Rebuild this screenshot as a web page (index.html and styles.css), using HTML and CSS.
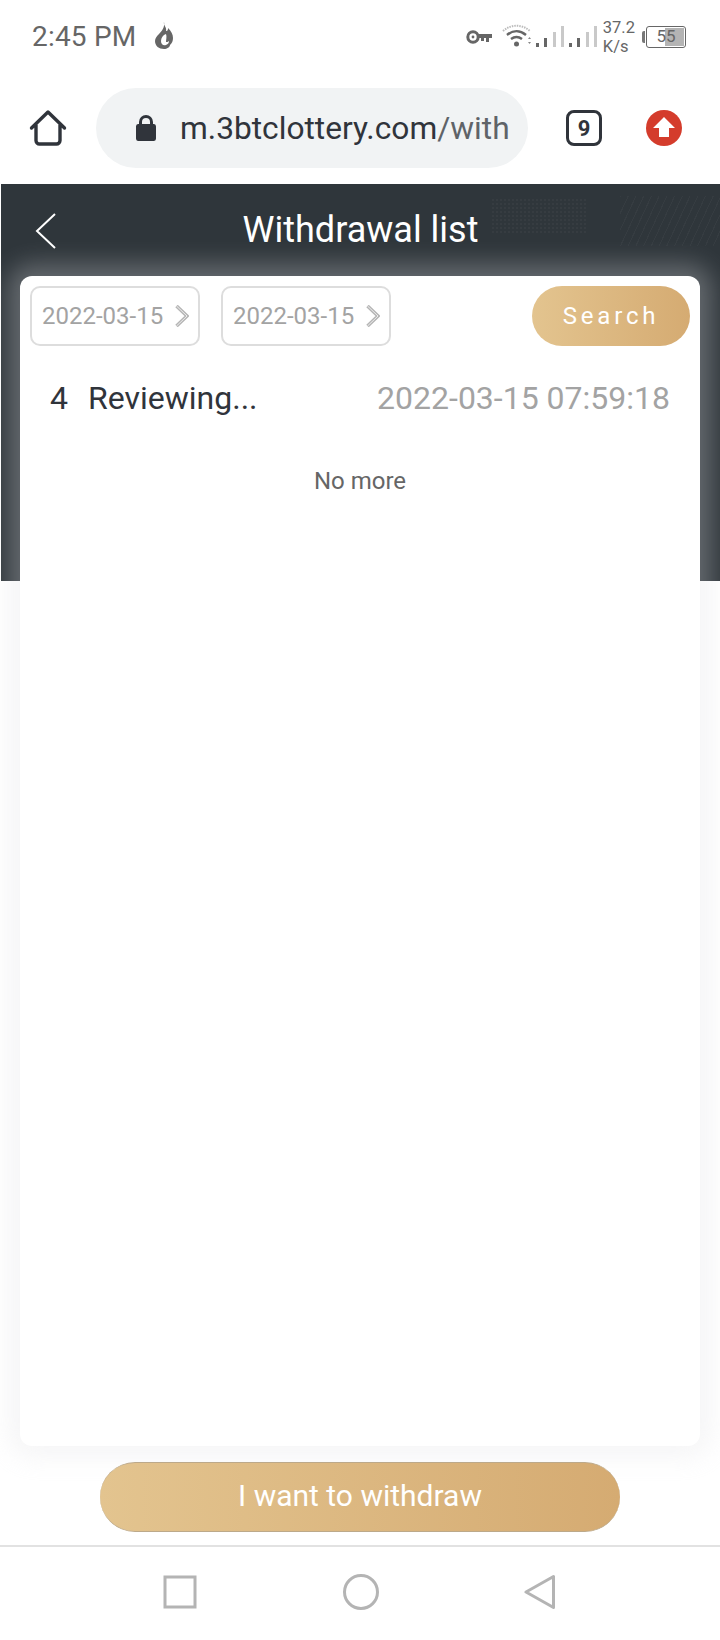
FILE: index.html
```html
<!DOCTYPE html>
<html lang="en">
<head>
<meta charset="utf-8">
<title>Withdrawal list</title>
<link rel="stylesheet" href="styles.css">
</head>
<body>
<div class="phone">
  <div class="status">
    <div class="status-left">
      <span class="time">2:45 PM</span>
      <svg class="flame" width="20" height="30" viewBox="0 0 20 30"><path fill="#666" fill-rule="evenodd" d="M10 0c-1 3 3 5 2 9 2 0 2-2 2-3 3 3 5 6 5 10 0 3-1 5-3 7 0 2-3 4-6 4-5 0-9-3-9-8 0-3 2-5 4-7 3-3 6-7 5-12zM12 12c-3 1-5 4-5 7s2 5 5 4c2-1 3-2 3-4-1 1-2 1-3 1 0-3 1-5 0-8z"/></svg>
    </div>
    <div class="status-right">
      <svg class="key" width="27" height="16" viewBox="0 0 27 16"><circle cx="7" cy="8" r="5.2" fill="none" stroke="#666" stroke-width="3"/><circle cx="7" cy="8" r="1.400" fill="#666"/><path fill="#666" d="M12 5h14v4h-3v4h-3V9h-2v3h-3V9h-3z"/></svg>
      <svg class="wifi" width="30" height="26" viewBox="0 0 30 26"><path d="M1 7C9 0 20 0 28 7" fill="none" stroke="#bbb" stroke-width="2" stroke-dasharray="1.500 1"/><path d="M5 11c6-5 13-5 19 0M9 15c4-3 7-3 11 0" fill="none" stroke="#666" stroke-width="2.400"/><circle cx="14.500" cy="20" r="2.500" fill="#666"/><path d="M26 15h3l-1.500-2zM26 18h3l-1.500 2z" fill="#888"/></svg>
      <svg class="signal" width="31" height="24" viewBox="0 0 31 24"><g fill="#666"><rect x="0" y="18" width="3" height="4"/><rect x="8" y="13" width="3" height="9"/></g><g fill="#c9c9c9"><rect x="17" y="7" width="3" height="15"/><rect x="25" y="1" width="3" height="21"/></g></svg>
      <svg class="signal" width="31" height="24" viewBox="0 0 31 24"><g fill="#666"><rect x="0" y="18" width="3" height="4"/><rect x="8" y="13" width="3" height="9"/></g><g fill="#c9c9c9"><rect x="17" y="7" width="3" height="15"/><rect x="25" y="1" width="3" height="21"/></g></svg>
      <div class="speed"><span>37.2</span><span>K/s</span></div>
      <div class="battery">
        <span class="battery-nub"></span>
        <div class="battery-body"><span class="battery-fill"></span><span class="battery-num">55</span></div>
      </div>
    </div>
  </div>

  <div class="browser">
    <svg class="home" width="38" height="38" viewBox="0 0 38 38"><path d="M2.500 19 19 3l16.500 16M7 16v15.500a3.500 3.500 0 0 0 3.500 3.500h17a3.500 3.500 0 0 0 3.500-3.500V16" fill="none" stroke="#30343b" stroke-width="3.400" stroke-linecap="round" stroke-linejoin="round"/></svg>
    <div class="urlbar">
      <svg class="lock" width="22" height="28" viewBox="0 0 22 28"><path fill="#30343b" d="M4 10V8a7 7 0 0 1 14 0v2h1a2.500 2.500 0 0 1 2 2.500v12a2.500 2.500 0 0 1-2 2.500H3a2.500 2.500 0 0 1-2-2.500v-12A2.500 2.500 0 0 1 3 10zM7 10h8V8a4 4 0 0 0-8 0z"/></svg>
      <span class="url"><span class="url-host">m.3btclottery.com</span>/with</span>
    </div>
    <div class="tabs">9</div>
    <svg class="update" width="36" height="36" viewBox="0 0 36 36"><circle cx="18" cy="18" r="18" fill="#d43c2c"/><path fill="#fff" d="M18 7 29 18h-6v9H13v-9H7z"/></svg>
  </div>

  <main class="page">
    <header class="hero">
      <svg class="back" width="22" height="38" viewBox="0 0 22 38"><path d="M20 2 2 19l18 17" fill="none" stroke="#fff" stroke-width="2"/></svg>
      <h1 class="title">Withdrawal list</h1>
    </header>
    <section class="card">
      <div class="filters">
        <div class="date"><span>2022-03-15</span><svg width="14" height="22" viewBox="0 0 14 22"><path d="M1.500 1 12 11 1.500 21" fill="none" stroke="#b5b5b5" stroke-width="3.500"/><path d="M1.500 1 12 11 1.500 21" fill="none" stroke="#eee" stroke-width="1"/></svg></div>
        <div class="date"><span>2022-03-15</span><svg width="14" height="22" viewBox="0 0 14 22"><path d="M1.500 1 12 11 1.500 21" fill="none" stroke="#b5b5b5" stroke-width="3.500"/><path d="M1.500 1 12 11 1.500 21" fill="none" stroke="#eee" stroke-width="1"/></svg></div>
        <button class="search">Search</button>
      </div>
      <div class="row">
        <span class="row-id">4</span>
        <span class="row-status">Reviewing...</span>
        <span class="row-time">2022-03-15 07:59:18</span>
      </div>
      <p class="nomore">No more</p>
    </section>
    <div class="actions"><button class="withdraw">I want to withdraw</button></div>
  </main>

  <nav class="navbar">
    <svg width="34" height="34" viewBox="0 0 34 34"><rect x="2" y="2" width="30" height="30" fill="none" stroke="#b4b4b4" stroke-width="3"/></svg>
    <svg width="38" height="38" viewBox="0 0 38 38"><circle cx="19" cy="19" r="16.500" fill="none" stroke="#b4b4b4" stroke-width="3"/></svg>
    <svg width="32" height="36" viewBox="0 0 32 36"><path d="M29.500 2.500v31L2 18z" fill="none" stroke="#b4b4b4" stroke-width="3" stroke-linejoin="round"/></svg>
  </nav>
</div>
</body>
</html>
```
FILE: styles.css
```css
* { box-sizing: border-box; }
html, body { margin: 0; padding: 0; background: #fff; }
body { font-family: Roboto, "Liberation Sans", sans-serif; }
.phone { width: 720px; height: 1640px; display: flex; flex-direction: column; overflow: hidden; }

.status { height: 72px; display: flex; justify-content: space-between; align-items: center; padding: 1px 34px 0 32px; color: #666; }
.status-left { display: flex; align-items: center; gap: 18px; }
.time { font-size: 28px; letter-spacing: .2px; }
.flame { display: block; }
.status-right { display: flex; align-items: center; }
.key { margin-right: 9px; }
.wifi { margin-right: 4px; }
.signal { margin-right: 2px; }
.speed { display: flex; flex-direction: column; font-size: 16.500px; line-height: 19px; margin: 0 7px 0 1px; }
.battery { display: flex; align-items: center; gap: 1px; }
.battery-nub { width: 3px; height: 12px; background: #777; border-radius: 2px 0 0 2px; }
.battery-body { position: relative; width: 40px; height: 22px; border: 1.500px solid #666; border-radius: 3px; font-size: 17px; line-height: 19px; text-align: center; }
.battery-fill { position: absolute; right: 1px; top: 1px; bottom: 1px; width: 19px; background: #b4b4b4; }
.battery-num { position: relative; }

.browser { height: 112px; display: flex; align-items: center; padding: 0 36px 0 29px; }
.home { margin-right: 29px; }
.urlbar { width: 432px; height: 80px; border-radius: 40px; background: #f1f3f4; display: flex; align-items: center; padding-left: 39px; margin-right: 38px; overflow: hidden; }
.lock { margin-right: 23px; flex: none; }
.url { font-size: 31.700px; color: #5f6368; white-space: nowrap; }
.url-host { color: #30343b; }
.tabs { width: 36px; height: 36px; border: 3.500px solid #30343b; border-radius: 8px; font-size: 22px; font-weight: 700; color: #30343b; display: flex; align-items: center; justify-content: center; margin-right: 44px; }
.update { display: block; }

.page { flex: 1; display: flex; flex-direction: column; min-height: 0; }
.hero { height: 397px; margin-left: 1px; background: #2f363b; display: flex; align-items: flex-start; justify-content: center; position: relative; padding-top: 23px; }
.hero::before { content: ""; position: absolute; left: 490px; top: 14px; width: 95px; height: 36px; background: radial-gradient(circle, rgba(255,255,255,.03) 0 1px, transparent 1px) 0 0 / 4px 4px; }
.hero::after { content: ""; position: absolute; right: 0; top: 12px; width: 100px; height: 50px; background: repeating-linear-gradient(115deg, rgba(255,255,255,.03) 0 1px, transparent 1px 7px); }
.back { position: absolute; left: 34px; top: 28px; }
.title { margin: 0; font-size: 36px; line-height: 46px; font-weight: 400; color: #fff; }
.card { margin: -305px 20px 0; height: 1170px; background: #fff; border-radius: 12px; box-shadow: 0 0 24px 12px rgba(224,226,228,.3); position: relative; z-index: 1; padding: 10px 10px 0; }
.filters { display: flex; align-items: center; height: 60px; }
.date { width: 170px; height: 60px; border: 2px solid #ddd; border-radius: 10px; display: flex; align-items: center; justify-content: space-between; padding: 0 9px 0 10px; color: #a3a3a3; font-size: 24px; margin-right: 21px; }
.search { margin-left: auto; width: 158px; height: 60px; border: 0; border-radius: 30px; background: linear-gradient(90deg, #e3c48f, #d5ab72); color: #fff; font: 400 24px Roboto, sans-serif; letter-spacing: 3.800px; padding: 0; }
.row { display: flex; align-items: center; height: 54px; margin-top: 25px; padding: 0 20px; font-size: 32px; color: #30343b; }
.row-id { margin-right: 20px; }
.row-time { margin-left: auto; color: #a3a3a3; }
.nomore { margin: 42px 0 0; text-align: center; font-size: 24px; line-height: 28px; color: #666; }
.actions { display: flex; justify-content: center; margin-top: 16px; position: relative; z-index: 1; }
.withdraw { width: 520px; height: 70px; border: 0; border-top: 1px solid #bca98a; border-bottom: 1px solid #bca98a; border-radius: 35px; background: linear-gradient(90deg, #e3c48f, #d5ab72); color: #fff; font: 400 30px Roboto, sans-serif; padding: 0 0 3px; }

.navbar { height: 95px; margin-top: 13px; border-top: 2px solid #e2e2e2; display: flex; justify-content: space-between; align-items: center; padding: 0 164px 4px 163px; }
.navbar svg { display: block; }
```
